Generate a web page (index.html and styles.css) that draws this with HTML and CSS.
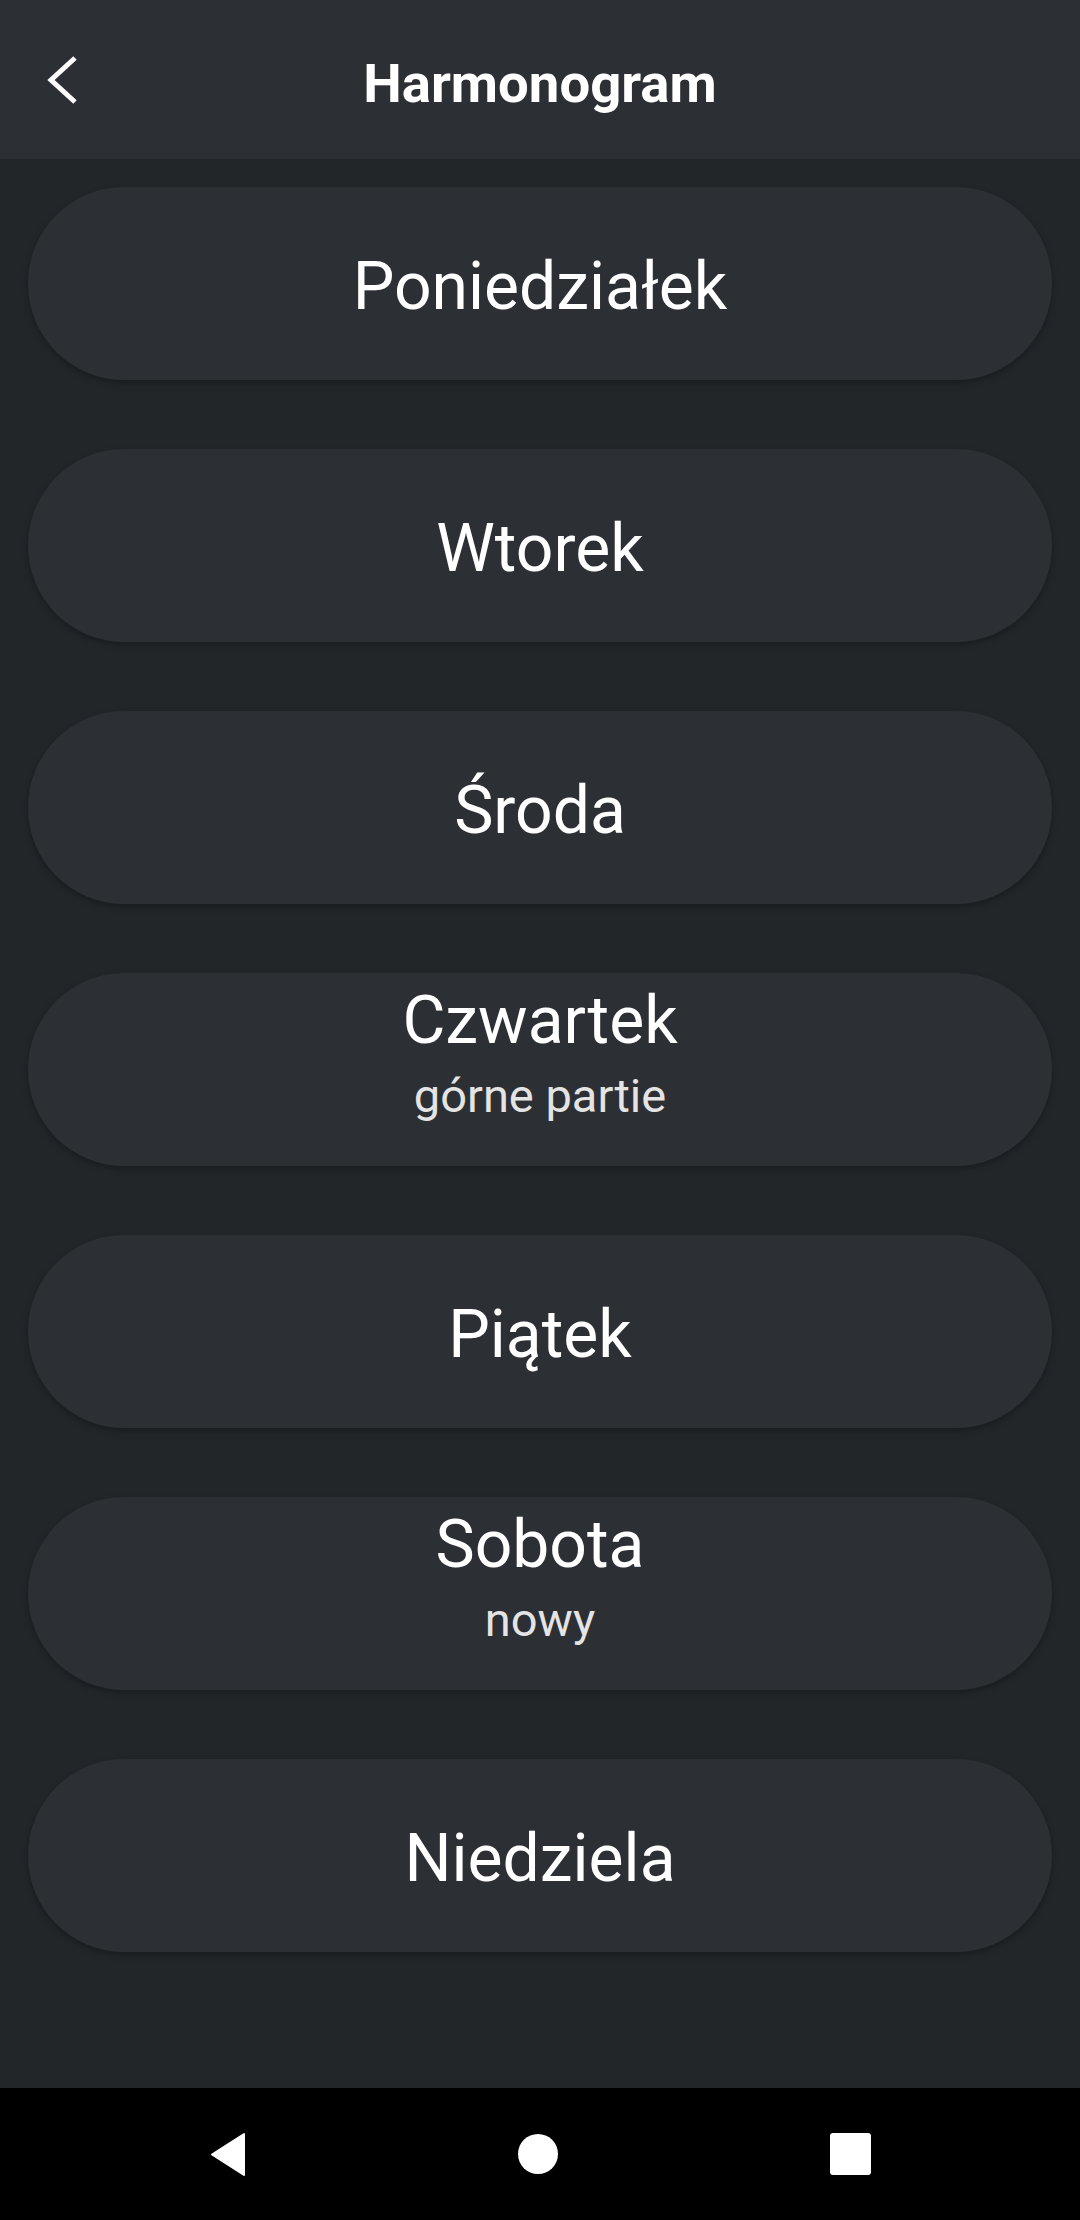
FILE: index.html
```html
<!DOCTYPE html>
<html lang="pl">
<head>
<meta charset="utf-8">
<title>Harmonogram</title>
<link rel="stylesheet" href="styles.css">
</head>
<body>
<div class="screen">
  <header class="appbar">
    <div class="back">
      <svg width="100" height="159" viewBox="0 0 100 159"><path d="M75 58 L51 80 L75 102" fill="none" stroke="#ffffff" stroke-width="5" stroke-linejoin="miter"/></svg>
    </div>
    <h1 class="title">Harmonogram</h1>
    <div></div>
  </header>
  <main class="list">
    <div class="card"><span class="day">Poniedziałek</span></div>
    <div class="card"><span class="day">Wtorek</span></div>
    <div class="card"><span class="day">Środa</span></div>
    <div class="card has-sub"><span class="day">Czwartek</span><span class="sub">górne partie</span></div>
    <div class="card"><span class="day">Piątek</span></div>
    <div class="card has-sub"><span class="day">Sobota</span><span class="sub">nowy</span></div>
    <div class="card"><span class="day">Niedziela</span></div>
  </main>
  <nav class="navbar">
    <svg class="nav-back" width="37" height="45" viewBox="0 0 37 45"><path d="M35 2 L35 43 L3 22.5 Z" fill="#fff" stroke="#fff" stroke-width="2" stroke-linejoin="round"/></svg>
    <span class="nav-home"></span>
    <span class="nav-recent"></span>
  </nav>
</div>
</body>
</html>
```
FILE: styles.css
```css
* { box-sizing: border-box; }
html, body {
  margin: 0;
  padding: 0;
  background: #232629;
}
body {
  font-family: Roboto, "Noto Sans", "Liberation Sans", sans-serif;
  color: #ffffff;
}
.screen {
  width: 1080px;
  height: 2220px;
  display: flex;
  flex-direction: column;
  overflow: hidden;
}
.appbar {
  height: 159px;
  flex: none;
  background: #2c2f33;
  display: grid;
  grid-template-columns: 1fr auto 1fr;
  align-items: center;
}
.back {
  height: 159px;
  display: flex;
  align-items: flex-start;
}
.back svg { display: block; }
.title {
  margin: 8px 0 0 0;
  font-size: 54.5px;
  line-height: 1;
  font-weight: 700;
  letter-spacing: 0;
}
.list {
  flex: 1;
  display: flex;
  flex-direction: column;
  gap: 69px;
  padding: 28px 28px 0 28px;
}
.card {
  height: 193px;
  flex: none;
  border-radius: 96px;
  background: #2c2f33;
  box-shadow: 0 3px 6px rgba(0, 0, 0, 0.28);
  display: flex;
  flex-direction: column;
  align-items: center;
  justify-content: center;
  padding-top: 7px;
}
.card.has-sub {
  padding-top: 0;
  padding-bottom: 33px;
}
.day {
  font-size: 66px;
  line-height: 1;
  font-weight: 400;
}
.sub {
  margin-top: 18px;
  font-size: 47px;
  line-height: 1;
  color: #e4e4e4;
}
.navbar {
  height: 132px;
  flex: none;
  background: #000000;
  display: flex;
  align-items: center;
  justify-content: center;
  gap: 272px;
}
.nav-back { display: block; }
.nav-home {
  width: 40px;
  height: 40px;
  border-radius: 50%;
  background: #ffffff;
}
.nav-recent {
  width: 41px;
  height: 42px;
  border-radius: 3px;
  background: #ffffff;
}
```
